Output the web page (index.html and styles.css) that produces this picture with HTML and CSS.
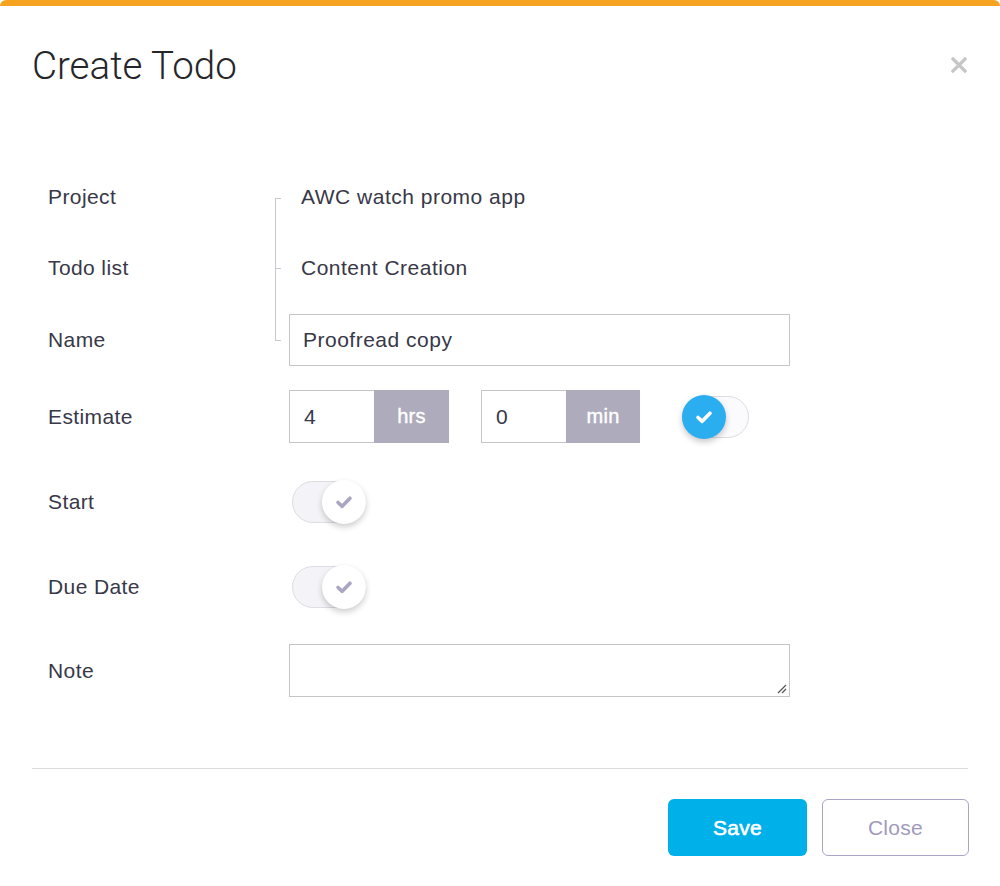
FILE: index.html
```html
<!DOCTYPE html>
<html>
<head>
<meta charset="utf-8">
<link rel="stylesheet" href="styles.css">
</head>
<body>
<div class="modal">
  <div class="modal-header">
    <h1 class="title">Create Todo</h1>
    <button class="close-x" aria-label="Close">
      <svg width="16" height="16" viewBox="0 0 16 16"><path d="M2 2 L14 14 M14 2 L2 14" stroke="#c6c6c6" stroke-width="3.2" stroke-linecap="square"/></svg>
    </button>
  </div>
  <div class="modal-body">
    <div class="group">
      <div class="bracket"><span class="tick-mid"></span></div>
      <div class="row row-first">
        <div class="label">Project</div>
        <div class="value text-value">AWC watch promo app</div>
      </div>
      <div class="row row-tight">
        <div class="label">Todo list</div>
        <div class="value text-value">Content Creation</div>
      </div>
      <div class="row row-tight">
        <div class="label">Name</div>
        <div class="value"><div class="input wide">Proofread copy</div></div>
      </div>
    </div>
    <div class="row row-est">
      <div class="label">Estimate</div>
      <div class="value estimate">
        <div class="input-group">
          <div class="input short">4</div>
          <div class="addon">hrs</div>
        </div>
        <div class="input-group">
          <div class="input short">0</div>
          <div class="addon">min</div>
        </div>
        <div class="toggle toggle-on">
          <span class="knob knob-blue">
            <svg width="22" height="22" viewBox="0 0 22 22"><path d="M5 11.5 L9.2 15.3 L17 7.2" fill="none" stroke="#fff" stroke-width="3.6" stroke-linecap="round" stroke-linejoin="round"/></svg>
          </span>
        </div>
      </div>
    </div>
    <div class="row row-toggle">
      <div class="label">Start</div>
      <div class="value">
        <div class="toggle toggle-off">
          <span class="knob knob-white">
            <svg width="22" height="22" viewBox="0 0 22 22"><path d="M5 11.5 L9.2 15.3 L17 7.2" fill="none" stroke="#aaa6c2" stroke-width="3.6" stroke-linecap="round" stroke-linejoin="round"/></svg>
          </span>
        </div>
      </div>
    </div>
    <div class="row row-toggle">
      <div class="label">Due Date</div>
      <div class="value">
        <div class="toggle toggle-off">
          <span class="knob knob-white">
            <svg width="22" height="22" viewBox="0 0 22 22"><path d="M5 11.5 L9.2 15.3 L17 7.2" fill="none" stroke="#aaa6c2" stroke-width="3.6" stroke-linecap="round" stroke-linejoin="round"/></svg>
          </span>
        </div>
      </div>
    </div>
    <div class="row row-note">
      <div class="label">Note</div>
      <div class="value">
        <div class="textarea">
          <svg class="grip" width="10" height="10" viewBox="0 0 10 10"><path d="M1 9 L9 1 M5 9 L9 5" stroke="#555" stroke-width="1.2"/></svg>
        </div>
      </div>
    </div>
  </div>
  <div class="modal-footer">
    <button class="btn btn-save">Save</button>
    <button class="btn btn-close">Close</button>
  </div>
</div>
</body>
</html>
```

FILE: styles.css
```css
* { box-sizing: border-box; }
html, body {
  margin: 0;
  padding: 0;
  background: #ffffff;
}
body {
  font-family: "Liberation Sans", Arial, sans-serif;
  color: #383848;
}
.modal {
  width: 1000px;
  height: 886px;
  border-top: 6px solid #f6a31f;
  border-radius: 6px 6px 0 0;
  background: #fff;
  overflow: hidden;
}
.modal-header {
  display: flex;
  align-items: center;
  justify-content: space-between;
  padding: 37px 33px 0 32px;
  height: 82px;
}
.title {
  margin: 0;
  font-family: Roboto, "Liberation Sans", sans-serif;
  font-weight: 300;
  font-size: 38.5px;
  line-height: 46px;
  color: #26262a;
}
.close-x {
  border: 0;
  background: none;
  padding: 0;
  margin-top: -2px;
  width: 16px;
  height: 16px;
  display: flex;
}
.modal-body {
  position: relative;
  height: 681px;
  margin: 0 32px;
  padding: 83px 0 0 16px;
  border-bottom: 1px solid #dcdcdc;
}
.modal-footer {
  display: flex;
  justify-content: flex-end;
  gap: 15px;
  padding: 30px 31px 0 0;
}

.group { position: relative; }
.bracket {
  position: absolute;
  left: 227px;
  top: 27px;
  width: 6px;
  height: 143px;
  border: 1px solid #c9c9cf;
  border-right: 0;
}
.tick-mid {
  position: absolute;
  left: 0;
  top: 69px;
  width: 5px;
  height: 1px;
  background: #c9c9cf;
}
.row {
  display: flex;
  align-items: center;
}
.label {
  width: 241px;
  flex: none;
  font-size: 21px;
  letter-spacing: 0.4px;
  color: #383848;
}
.value {
  flex: 1;
  display: flex;
  align-items: center;
}
.text-value {
  padding-left: 12px;
  font-size: 21px;
  letter-spacing: 0.5px;
  color: #383848;
}
.row-first { height: 52px; }
.row-tight { height: 52px; margin-top: 19px; }
.row-tight + .row-tight { margin-top: 20px; }
.row-est { height: 53px; margin-top: 24px; }
.row-toggle { height: 53px; margin-top: 32px; }
.row-note { height: 53px; margin-top: 31px; }

.input {
  height: 52px;
  border: 1px solid #c5c5c5;
  background: #fff;
  font-size: 21px;
  letter-spacing: 0.5px;
  color: #383848;
  display: flex;
  align-items: center;
  padding-left: 13px;
}
.wide { width: 501px; }
.estimate { gap: 32px; }
.input-group {
  display: flex;
  height: 53px;
}
.input-group .input {
  height: 53px;
  width: 85px;
  border-right: 0;
  padding-left: 14px;
}
.addon {
  width: 75px;
  height: 53px;
  background: #aeabbd;
  color: #fff;
  font-size: 20px;
  font-weight: 400;
  letter-spacing: 0.3px;
  -webkit-text-stroke: 0.4px #fff;
  display: flex;
  align-items: center;
  justify-content: center;
}
.input-group + .input-group .addon { width: 74px; }

.toggle {
  position: relative;
  height: 42px;
  border: 1px solid #dddde3;
  border-radius: 21px;
}
.toggle-on {
  width: 67px;
  background: #fbfbfd;
  margin-left: 10px;
}
.toggle-off {
  width: 74px;
  background: #f4f4f8;
  margin-left: 3px;
}
.knob {
  position: absolute;
  top: -2px;
  width: 44px;
  height: 44px;
  border-radius: 50%;
  display: flex;
  align-items: center;
  justify-content: center;
}
.knob-blue {
  left: -1px;
  background: #2aaef0;
  box-shadow: 0 3px 6px rgba(0, 0, 0, 0.22);
}
.knob-white {
  right: -1px;
  background: #fff;
  box-shadow: 0 3px 6px rgba(0, 0, 0, 0.2);
}
.textarea {
  position: relative;
  width: 501px;
  height: 53px;
  border: 1px solid #c5c5c5;
  background: #fff;
}
.grip {
  position: absolute;
  right: 2px;
  bottom: 2px;
}
.btn {
  height: 57px;
  border-radius: 6px;
  font-family: "Liberation Sans", Arial, sans-serif;
  font-size: 21px;
  letter-spacing: 0.3px;
}
.btn-save {
  width: 139px;
  background: #00b0e8;
  border: 0;
  color: #fff;
  -webkit-text-stroke: 0.6px #fff;
}
.btn-close {
  width: 147px;
  background: #fff;
  border: 1.5px solid #aaa5c8;
  color: #9f9abd;
}
```
